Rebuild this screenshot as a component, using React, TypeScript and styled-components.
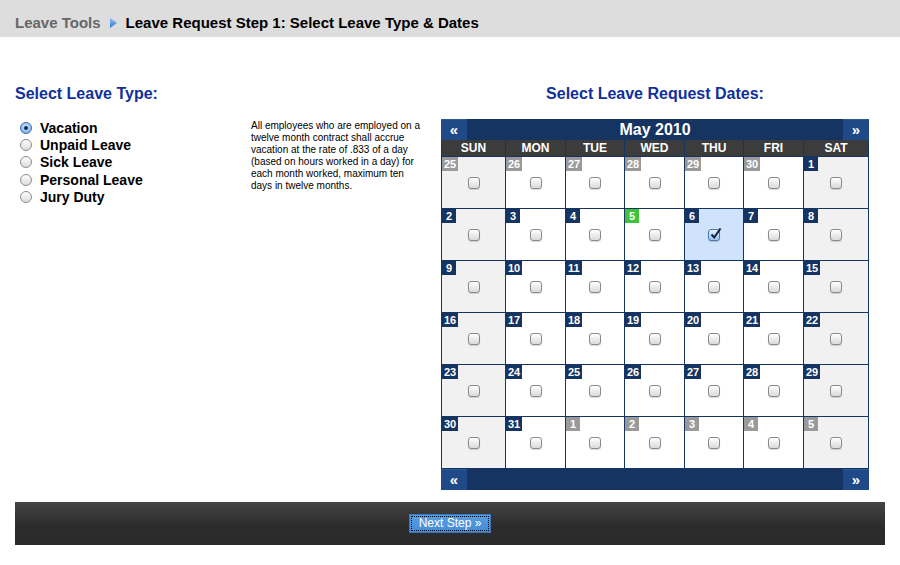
import React, { useState } from "react";
import styled, { createGlobalStyle } from "styled-components";

const GlobalStyle = createGlobalStyle`
  html, body {
    margin: 0;
    padding: 0;
    background: #ffffff;
    font-family: "Liberation Sans", Arial, sans-serif;
  }
`;

const NAVY = "#163461";

const Page = styled.div`
  width: 900px;
  height: 565px;
  display: flex;
  flex-direction: column;
`;

const Header = styled.div`
  height: 37px;
  background: #dddddd;
  display: flex;
  align-items: center;
  padding: 7px 15px 0 15px;
  box-sizing: border-box;
  font-size: 15px;
  font-weight: bold;
`;

const Crumb = styled.span<{ $current?: boolean }>`
  color: ${(p) => (p.$current ? "#000000" : "#666666")};
`;

const CrumbArrow = styled.svg`
  margin: 1px 9px 0 9px;
`;

const Main = styled.div`
  display: flex;
  padding: 48px 0 0 15px;
`;

const LeftPane = styled.div`
  width: 426px;
`;

const RightPane = styled.div`
  width: 428px;
  display: flex;
  flex-direction: column;
  align-items: center;
`;

const SectionTitle = styled.h2`
  margin: 0 0 16px 0;
  font-size: 16px;
  line-height: 18px;
  font-weight: bold;
  color: #10309b;
`;

const LeftBody = styled.div`
  display: flex;
`;

const RadioList = styled.div`
  width: 236px;
  padding: 0 0 0 5px;
  box-sizing: border-box;
  display: flex;
  flex-direction: column;
`;

const RadioRow = styled.label`
  display: flex;
  align-items: center;
  height: 17.3px;
  font-size: 14px;
  font-weight: bold;
  color: #000;
  cursor: pointer;
`;

const RadioDot = styled.span<{ $checked: boolean }>`
  width: 12px;
  height: 12px;
  border-radius: 50%;
  box-sizing: border-box;
  margin-right: 8px;
  border: 1px solid ${(p) => (p.$checked ? "#3a6fb0" : "#8c8c8c")};
  background: ${(p) =>
    p.$checked
      ? "radial-gradient(circle at 50% 40%, #d6ebff 0%, #8fc0f2 60%, #5c98da 100%)"
      : "linear-gradient(#fdfdfd, #dcdcdc)"};
  display: flex;
  align-items: center;
  justify-content: center;
  &::after {
    content: "";
    width: 4px;
    height: 4px;
    border-radius: 50%;
    background: ${(p) => (p.$checked ? "#102a4f" : "transparent")};
  }
`;

const Description = styled.p`
  margin: 1px 0 0 0;
  width: 176px;
  font-size: 10px;
  line-height: 12px;
  color: #000;
`;

const Calendar = styled.div`
  width: 428px;
  background: ${NAVY};
  display: flex;
  flex-direction: column;
`;

const NavBar = styled.div`
  height: 21px;
  display: flex;
  align-items: stretch;
`;

const NavButton = styled.button`
  width: 26px;
  padding: 0 0 1px 0;
  border: none;
  border-top: 1px solid #2c5a97;
  background: #1f4a87;
  color: #fff;
  font-family: "Liberation Sans", Arial, sans-serif;
  font-size: 15px;
  font-weight: bold;
  line-height: 18px;
  cursor: pointer;
`;

const MonthTitle = styled.div`
  flex: 1;
  text-align: center;
  color: #fff;
  font-size: 16px;
  font-weight: bold;
  line-height: 21px;
`;

const Grid = styled.div`
  display: grid;
  grid-template-columns: 63px 59px 58px 59px 58px 59px 64px;
  gap: 1px;
  padding: 0 1px 1px 1px;
`;

const DayHead = styled.div`
  height: 16px;
  background: #3c3c3c;
  color: #fff;
  font-size: 12px;
  font-weight: bold;
  line-height: 16px;
  text-align: center;
`;

const DayCell = styled.div<{ $weekend: boolean; $selected: boolean }>`
  height: 51px;
  background: ${(p) =>
    p.$selected ? "#cfe3fc" : p.$weekend ? "#f1f1f1" : "#ffffff"};
  display: flex;
  flex-direction: column;
  align-items: flex-start;
  cursor: pointer;
`;

const DayBadge = styled.span<{ $kind: "in" | "out" | "today" }>`
  height: 14px;
  min-width: 10px;
  padding: 0 2px;
  font-size: 11px;
  font-weight: bold;
  line-height: 14px;
  color: #fff;
  text-align: center;
  background: ${(p) =>
    p.$kind === "today" ? "#3cc43c" : p.$kind === "out" ? "#9a9a9a" : NAVY};
`;

const Check = styled.span<{ $checked: boolean }>`
  align-self: center;
  margin-top: 6px;
  width: 12px;
  height: 12px;
  box-sizing: border-box;
  border-radius: 3px;
  border: 1px solid ${(p) => (p.$checked ? "#4f77a8" : "#8a8a8a")};
  background: ${(p) =>
    p.$checked
      ? "linear-gradient(#e2f0ff, #9cc6f0)"
      : "linear-gradient(#ffffff, #d9d9d9)"};
  box-shadow: 0 1px 1px rgba(0, 0, 0, 0.15);
  position: relative;
`;

const CheckMark = styled.svg`
  position: absolute;
  left: 0px;
  top: -3px;
`;

const Footer = styled.div`
  margin: 12px 15px 0 15px;
  height: 43px;
  background: linear-gradient(#454545 0%, #2c2c2c 55%, #2a2a2a 100%);
  display: flex;
  align-items: center;
  justify-content: center;
`;

const NextButton = styled.button`
  width: 82px;
  height: 19px;
  margin-top: 0px;
  padding: 0;
  border: 1px solid #3c78bd;
  background: linear-gradient(#54a0e6, #468ad6);
  color: #fff;
  font-family: "Liberation Sans", Arial, sans-serif;
  font-size: 12px;
  line-height: 17px;
  outline: 1px dotted #000;
  outline-offset: -3px;
  cursor: pointer;
`;

const leaveTypes = [
  "Vacation",
  "Unpaid Leave",
  "Sick Leave",
  "Personal Leave",
  "Jury Duty",
];

const weekDays = ["SUN", "MON", "TUE", "WED", "THU", "FRI", "SAT"];

type Day = { n: number; kind: "in" | "out" | "today" };

const buildDays = (): Day[] => {
  const days: Day[] = [];
  for (let d = 25; d <= 30; d++) days.push({ n: d, kind: "out" });
  for (let d = 1; d <= 31; d++)
    days.push({ n: d, kind: d === 5 ? "today" : "in" });
  for (let d = 1; d <= 5; d++) days.push({ n: d, kind: "out" });
  return days;
};

export default () => {
  const [leaveType, setLeaveType] = useState("Vacation");
  const [selected, setSelected] = useState<string[]>(["in-6"]);
  const days = buildDays();

  const toggle = (key: string) =>
    setSelected((s) =>
      s.includes(key) ? s.filter((k) => k !== key) : [...s, key]
    );

  return (
    <Page>
      <GlobalStyle />
      <Header>
        <Crumb>Leave Tools</Crumb>
        <CrumbArrow width="7" height="10" viewBox="0 0 7 10">
          <defs>
            <linearGradient id="arr" x1="0" y1="0" x2="0" y2="1">
              <stop offset="0" stopColor="#8ec2f5" />
              <stop offset="1" stopColor="#2f78d0" />
            </linearGradient>
          </defs>
          <polygon points="0,0 7,5 0,10" fill="url(#arr)" />
        </CrumbArrow>
        <Crumb $current>Leave Request Step 1: Select Leave Type &amp; Dates</Crumb>
      </Header>

      <Main>
        <LeftPane>
          <SectionTitle>Select Leave Type:</SectionTitle>
          <LeftBody>
            <RadioList>
              {leaveTypes.map((t) => (
                <RadioRow key={t} onClick={() => setLeaveType(t)}>
                  <RadioDot $checked={leaveType === t} />
                  {t}
                </RadioRow>
              ))}
            </RadioList>
            <Description>
              All employees who are employed on a twelve month contract shall
              accrue vacation at the rate of .833 of a day (based on hours
              worked in a day) for each month worked, maximum ten days in
              twelve months.
            </Description>
          </LeftBody>
        </LeftPane>

        <RightPane>
          <SectionTitle>Select Leave Request Dates:</SectionTitle>
          <Calendar>
            <NavBar>
              <NavButton>«</NavButton>
              <MonthTitle>May 2010</MonthTitle>
              <NavButton>»</NavButton>
            </NavBar>
            <Grid>
              {weekDays.map((w) => (
                <DayHead key={w}>{w}</DayHead>
              ))}
              {days.map((d, i) => {
                const key = `${d.kind === "out" ? `out${i}` : "in"}-${d.n}`;
                const isChecked = selected.includes(key);
                const col = i % 7;
                return (
                  <DayCell
                    key={key}
                    $weekend={col === 0 || col === 6}
                    $selected={isChecked}
                    onClick={() => toggle(key)}
                  >
                    <DayBadge $kind={d.kind}>{d.n}</DayBadge>
                    <Check $checked={isChecked}>
                      {isChecked && (
                        <CheckMark width="13" height="13" viewBox="0 0 13 13">
                          <path
                            d="M2.5 7.5 L5.2 10.5 L11.5 1.5"
                            fill="none"
                            stroke="#0d1f3a"
                            strokeWidth="2"
                          />
                        </CheckMark>
                      )}
                    </Check>
                  </DayCell>
                );
              })}
            </Grid>
            <NavBar>
              <NavButton>«</NavButton>
              <MonthTitle />
              <NavButton>»</NavButton>
            </NavBar>
          </Calendar>
        </RightPane>
      </Main>

      <Footer>
        <NextButton>Next Step »</NextButton>
      </Footer>
    </Page>
  );
};
